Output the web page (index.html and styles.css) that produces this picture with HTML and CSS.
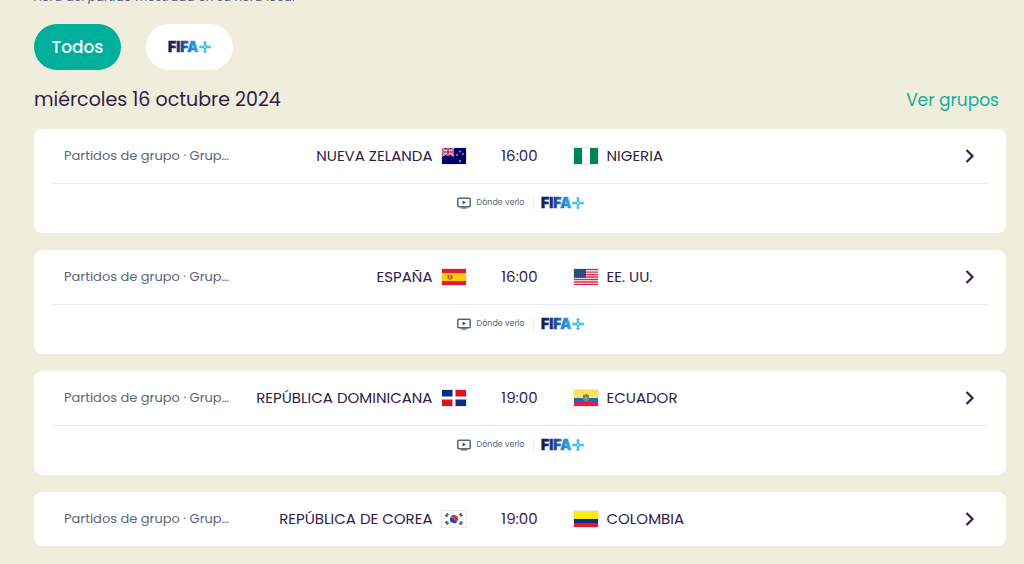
FILE: index.html
```
<!DOCTYPE html>
<html lang="es">
<head>
  <meta charset="UTF-8">
  <meta name="viewport" content="width=device-width, initial-scale=1">
  <title>Partidos</title>
  <link rel="stylesheet" href="styles.css">
</head>
<body>

<!-- shared drawings -->
<svg class="sprites" aria-hidden="true">
  <defs>
    <linearGradient id="fifaBlue" gradientUnits="userSpaceOnUse" x1="0" y1="0" x2="32" y2="0">
      <stop offset="0" stop-color="#101c4c"/>
      <stop offset=".35" stop-color="#14357f"/>
      <stop offset=".65" stop-color="#1f7cc9"/>
      <stop offset="1" stop-color="#38b8f0"/>
    </linearGradient>
    <symbol id="plus" viewBox="0 0 12 12">
      <g fill="#3fbdf0">
        <circle cx="6" cy="1.500" r="1.500"/><circle cx="6" cy="4" r="1.400"/>
        <circle cx="6" cy="8" r="1.400"/><circle cx="6" cy="10.500" r="1.500"/>
        <circle cx="1.500" cy="6" r="1.500"/><circle cx="4" cy="6" r="1.400"/>
        <circle cx="8" cy="6" r="1.400"/><circle cx="10.500" cy="6" r="1.500"/>
      </g>
    </symbol>
    <symbol id="tv" viewBox="0 0 14 12">
      <rect x=".8" y="1.2" width="12.4" height="8.6" rx="1" fill="none" stroke="#5a6478" stroke-width="1.5"/>
      <path d="M5.6 3.4v4.2L9 5.5z" fill="#3d4a63"/>
      <path d="M4 11h6" stroke="#5a6478" stroke-width="1.2"/>
    </symbol>
    <symbol id="chevron" viewBox="0 0 10 16">
      <path d="M1.500 2l6 6-6 6" fill="none" stroke="#3a1f4f" stroke-width="2.200"/>
    </symbol>
  </defs>
</svg>

<main>
  <p class="note">Hora del partido mostrada en su hora local</p>

  <div class="filters">
    <button type="button" class="filter active">Todos</button>
    <button type="button" class="filter" aria-label="FIFA+">
      <svg class="fifa" viewBox="0 0 44 20"><text x="0" y="15" class="fifa-word">FIFA</text><use href="#plus" x="31" y="4" width="12" height="12"/></svg>
    </button>
  </div>

  <div class="day">
    <h2>miércoles 16 octubre 2024</h2>
    <a href="#grupos">Ver grupos</a>
  </div>

  <section class="matches">
    <article class="match">
      <a class="match-row" href="#nzl-nga">
        <span class="side home">
          <span class="stage">Partidos de grupo · Grup…</span>
          <span class="team">NUEVA ZELANDA</span>
          <svg class="flag" viewBox="0 0 24 16">
            <path fill="#00006b" d="M0 0h24v16H0z"/>
            <path d="M0 0l12 8M12 0L0 8" stroke="#fff" stroke-width="1.800"/>
            <path d="M0 0l12 8M12 0L0 8" stroke="#d8203a" stroke-width=".8"/>
            <path d="M6 0v8M0 4h12" stroke="#fff" stroke-width="2.800"/>
            <path d="M6 0v8M0 4h12" stroke="#d8203a" stroke-width="1.600"/>
            <g fill="#e04a68" stroke="#fff" stroke-width=".3"><circle cx="18" cy="3.500" r=".8"/><circle cx="15" cy="7" r=".8"/><circle cx="21" cy="6" r=".8"/><circle cx="18" cy="13" r=".9"/></g>
          </svg>
        </span>
        <time class="hour">16:00</time>
        <span class="side away">
          <svg class="flag" viewBox="0 0 24 16"><path fill="#fff" d="M0 0h24v16H0z"/><path fill="#008751" d="M0 0h8v16H0zM16 0h8v16h-8z"/></svg>
          <span class="team">NIGERIA</span>
          <svg class="chevron"><use href="#chevron"/></svg>
        </span>
      </a>
      <div class="watch">
        <svg class="tv"><use href="#tv"/></svg>
        <span class="watch-label">Dónde verlo</span>
        <a href="#fifaplus" aria-label="FIFA+"><svg class="fifa" viewBox="0 0 44 20"><text x="0" y="15" class="fifa-word">FIFA</text><use href="#plus" x="31" y="4" width="12" height="12"/></svg></a>
      </div>
    </article>

    <article class="match">
      <a class="match-row" href="#esp-usa">
        <span class="side home">
          <span class="stage">Partidos de grupo · Grup…</span>
          <span class="team">ESPAÑA</span>
          <svg class="flag" viewBox="0 0 24 16">
            <path fill="#e3182d" d="M0 0h24v16H0z"/><path fill="#ffd000" d="M0 4h24v8H0z"/>
            <path fill="#b5532a" d="M5.500 6h5v3.500L8 11 5.500 9.500z"/><path d="M8 6v4" stroke="#e8b3a0"/>
          </svg>
        </span>
        <time class="hour">16:00</time>
        <span class="side away">
          <svg class="flag" viewBox="0 0 24 16">
            <path fill="#fff" d="M0 0h24v16H0z"/>
            <path d="M0 .6h24M0 3.100h24M0 5.600h24M0 8h24M0 10.500h24M0 13h24M0 15.400h24" stroke="#d22c4d" stroke-width="1.300"/>
            <path fill="#24467f" d="M0 0h12v8.600H0z"/>
            <path d="M1 2h11M1 4.300h11M1 6.600h11" stroke="#8295b8" stroke-width=".6" stroke-dasharray=".6 1.400"/>
          </svg>
          <span class="team">EE. UU.</span>
          <svg class="chevron"><use href="#chevron"/></svg>
        </span>
      </a>
      <div class="watch">
        <svg class="tv"><use href="#tv"/></svg>
        <span class="watch-label">Dónde verlo</span>
        <a href="#fifaplus" aria-label="FIFA+"><svg class="fifa" viewBox="0 0 44 20"><text x="0" y="15" class="fifa-word">FIFA</text><use href="#plus" x="31" y="4" width="12" height="12"/></svg></a>
      </div>
    </article>

    <article class="match">
      <a class="match-row" href="#dom-ecu">
        <span class="side home">
          <span class="stage">Partidos de grupo · Grup…</span>
          <span class="team">REPÚBLICA DOMINICANA</span>
          <svg class="flag" viewBox="0 0 24 16">
            <path fill="#fff" d="M0 0h24v16H0z"/>
            <path fill="#062f87" d="M0 0h10.500v6.500H0zM13.500 9.500H24V16H13.500z"/>
            <path fill="#dc1420" d="M13.500 0H24v6.500H13.500zM0 9.500h10.500V16H0z"/>
          </svg>
        </span>
        <time class="hour">19:00</time>
        <span class="side away">
          <svg class="flag" viewBox="0 0 24 16">
            <path fill="#ffe15a" d="M0 0h24v8H0z"/><path fill="#0a72c4" d="M0 8h24v4H0z"/><path fill="#ee1848" d="M0 12h24v4H0z"/>
            <path fill="#8d815f" d="M9 5l3-1 3 1v5l-3 2-3-2z"/><circle cx="12" cy="8" r="1.500" fill="#6fa4b5"/>
          </svg>
          <span class="team">ECUADOR</span>
          <svg class="chevron"><use href="#chevron"/></svg>
        </span>
      </a>
      <div class="watch">
        <svg class="tv"><use href="#tv"/></svg>
        <span class="watch-label">Dónde verlo</span>
        <a href="#fifaplus" aria-label="FIFA+"><svg class="fifa" viewBox="0 0 44 20"><text x="0" y="15" class="fifa-word">FIFA</text><use href="#plus" x="31" y="4" width="12" height="12"/></svg></a>
      </div>
    </article>

    <article class="match">
      <a class="match-row" href="#kor-col">
        <span class="side home">
          <span class="stage">Partidos de grupo · Grup…</span>
          <span class="team">REPÚBLICA DE COREA</span>
          <svg class="flag" viewBox="0 0 24 16">
            <path fill="#fff" d="M0 0h24v16H0z"/>
            <path fill="#dc3340" d="M8.200 6.500a4 4 0 0 1 7.600 3q-1.800 1-3.800-1.500t-3.800-1.500z"/>
            <path fill="#1450a8" d="M8.200 6.500a4 4 0 0 0 7.600 3q-1.800 1-3.800-1.500t-3.800-1.500z"/>
            <path d="M4 5.500l2-3M18 2.500l2 3M4 10.500l2 3M18 13.500l2-3" stroke="#444" stroke-width="2.600" stroke-dasharray="1.500 .4"/>
          </svg>
        </span>
        <time class="hour">19:00</time>
        <span class="side away">
          <svg class="flag" viewBox="0 0 24 16"><path fill="#fcea10" d="M0 0h24v8H0z"/><path fill="#10298a" d="M0 8h24v4H0z"/><path fill="#e5182c" d="M0 12h24v4H0z"/></svg>
          <span class="team">COLOMBIA</span>
          <svg class="chevron"><use href="#chevron"/></svg>
        </span>
      </a>
    </article>
  </section>
</main>

</body>
</html>
```
FILE: styles.css
```
* {
  box-sizing: border-box;
}

body {
  font-family: Poppins, Inter, "Open Sans", sans-serif;
  background: #efeddb;
  color: #331c45;
  margin: 0;
}

a {
  color: inherit;
  text-decoration: none;
}

.sprites {
  display: block;
  width: 0;
  height: 0;
}

main {
  margin-top: -12px;
  padding: 0 18px 18px 34px;
}

.note {
  margin: 0;
  font-size: 12px;
  font-style: italic;
  line-height: 18px;
  color: #57627a;
}

.filters {
  display: flex;
  gap: 25px;
  margin-top: 18px;
}

.filter {
  display: flex;
  align-items: center;
  justify-content: center;
  min-width: 87px;
  height: 46px;
  padding: 0 17px;
  border: none;
  border-radius: 23px;
  background: white;
  font-family: inherit;
  font-size: 17px;
  font-weight: 500;
  cursor: pointer;
}

.filter.active {
  background: #00ae9c;
  color: white;
}

.fifa {
  display: block;
  width: 44px;
  height: 20px;
}

.fifa-word {
  font-family: Inter, sans-serif;
  font-size: 14px;
  font-weight: 900;
  fill: url(#fifaBlue);
  stroke: url(#fifaBlue);
  stroke-width: 0.4;
}

.day {
  display: flex;
  justify-content: space-between;
  align-items: center;
  padding: 16px 7px 16px 0;
}

.day h2 {
  margin: 0;
  font-size: 19px;
  font-weight: 400;
  line-height: 27px;
}

.day a {
  color: #14ae9e;
  font-size: 17px;
  line-height: 24px;
}

.matches {
  display: flex;
  flex-direction: column;
  gap: 17px;
}

.match {
  padding: 0 18px;
  border-radius: 8px;
  background: white;
}

.match-row {
  display: grid;
  grid-template-columns: 1fr 108px 1fr;
  align-items: center;
  height: 54px;
  padding: 0 13px 1px 12px;
}

.side {
  display: flex;
  align-items: center;
  gap: 9px;
}

.stage {
  margin-right: auto;
  font-size: 13px;
  color: #5c6678;
  white-space: nowrap;
}

.team {
  font-size: 15px;
  white-space: nowrap;
}

.flag {
  width: 24px;
  height: 16px;
  outline: 1px solid #e9ebf1;
}

.hour {
  font-size: 15px;
  text-align: center;
}

.chevron {
  width: 10px;
  height: 16px;
  margin-left: auto;
}

.watch {
  display: flex;
  align-items: center;
  justify-content: center;
  height: 50px;
  padding: 0 0 11px 2px;
  border-top: 1px solid #e8ebf3;
}

.tv {
  width: 14px;
  height: 12px;
  margin-right: 6px;
}

.watch-label {
  padding-right: 9px;
  margin-right: 7px;
  border-right: 1px solid #e8ebf3;
  font-size: 8px;
  line-height: 12px;
  color: #5c6678;
}
```
